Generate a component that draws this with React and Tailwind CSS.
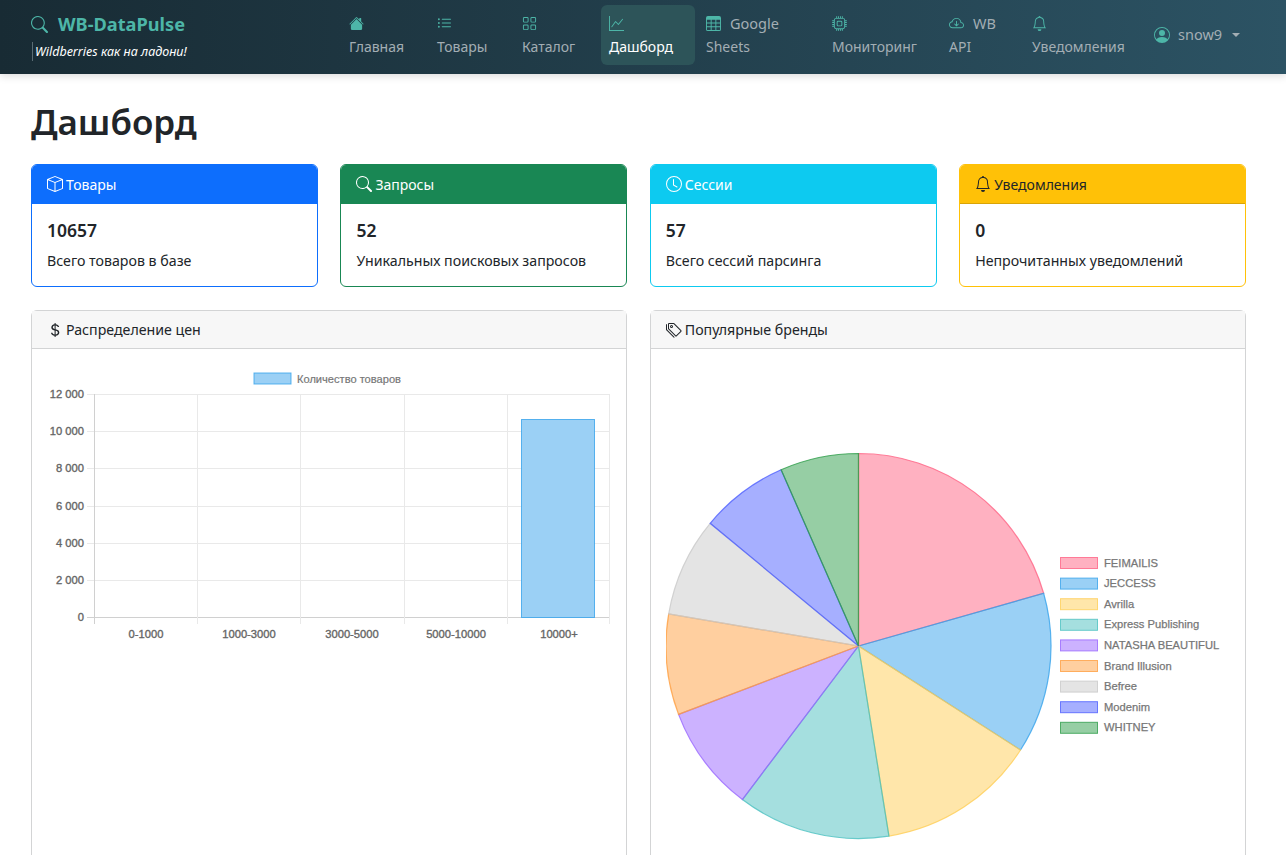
import {
  BsBell, BsBox, BsClock, BsCloudArrowDown, BsCpu, BsCurrencyDollar, BsGraphUp, BsGrid, BsHouseFill,
  BsListUl, BsPersonCircle, BsSearch, BsTable, BsTags,
} from 'react-icons/bs'

const font = { fontFamily: '"Noto Sans", sans-serif' }

const navItems = [
  { label: 'Главная', icon: BsHouseFill, width: 'w-[88px]' },
  { label: 'Товары', icon: BsListUl, width: 'w-[85px]' },
  { label: 'Каталог', icon: BsGrid, width: 'w-[79px] mr-[8px]' },
  { label: 'Дашборд', icon: BsGraphUp, width: 'w-[94px] mr-[3px]', active: true },
  { label: 'Google Sheets', icon: BsTable, width: 'w-[126px]', inline: true, first: 'Google', second: 'Sheets' },
  { label: 'Мониторинг', icon: BsCpu, width: 'w-[117px]' },
  { label: 'WB API', icon: BsCloudArrowDown, width: 'w-[83px]', inline: true, first: 'WB', second: 'API' },
  { label: 'Уведомления', icon: BsBell, width: 'w-[122px]' },
]

const stats = [
  { title: 'Товары', value: '10657', text: 'Всего товаров в базе', icon: BsBox, border: 'border-[#0d6efd]', head: 'bg-[#0d6efd] text-white border-[#0d6efd]' },
  { title: 'Запросы', value: '52', text: 'Уникальных поисковых запросов', icon: BsSearch, border: 'border-[#198754]', head: 'bg-[#198754] text-white border-[#198754]' },
  { title: 'Сессии', value: '57', text: 'Всего сессий парсинга', icon: BsClock, border: 'border-[#0dcaf0]', head: 'bg-[#0dcaf0] text-white border-[#0dcaf0]' },
  { title: 'Уведомления', value: '0', text: 'Непрочитанных уведомлений', icon: BsBell, border: 'border-[#ffc107]', head: 'bg-[#ffc107] text-[#212529] border-[#d9a406]' },
]

const brands = [
  { name: 'FEIMAILIS', color: '#ff6384', to: 74.1 },
  { name: 'JECCESS', color: '#36a2eb', to: 122.7 },
  { name: 'Avrilla', color: '#ffce56', to: 170.9 },
  { name: 'Express Publishing', color: '#4bc0c0', to: 217.1 },
  { name: 'NATASHA BEAUTIFUL', color: '#9966ff', to: 249.2 },
  { name: 'Brand Illusion', color: '#ff9f40', to: 279.6 },
  { name: 'Befree', color: '#c9c9c9', to: 309.6 },
  { name: 'Modenim', color: '#4d5fff', to: 336.3 },
  { name: 'WHITNEY', color: '#2e9e4a', to: 360 },
]

function NavLink({ item }) {
  const Icon = item.icon
  return (
    <a className={`${item.width} h-[60px] shrink-0 rounded-md px-2 pt-[7px] text-[14px] leading-[23px] ${item.active ? 'bg-[#2d5459] text-white' : 'text-[#a3aeb4]'}`}>
      <div className="flex h-[23px] items-center gap-[9px]">
        <Icon className="text-[15px] text-[#4db6a8]" />
        {item.inline && <span className="text-[14.5px]">{item.first}</span>}
      </div>
      <div>{item.inline ? item.second : item.label}</div>
    </a>
  )
}

function StatCard({ card }) {
  const Icon = card.icon
  return (
    <div className={`overflow-hidden rounded-md border bg-white ${card.border}`}>
      <div className={`flex h-[39px] items-center gap-[3px] border-b px-[15px] text-[14px] ${card.head}`}>
        <Icon className="text-[16px]" />
        <span className="pt-px">{card.title}</span>
      </div>
      <div className="h-[82px] px-[15px] pt-[14px] text-[#212529]">
        <div className="text-[17.5px] font-semibold leading-[24px]">{card.value}</div>
        <div className="mt-[7px] text-[14.2px] leading-[24px]">{card.text}</div>
      </div>
    </div>
  )
}

function ChartCard({ title, icon: Icon, gap, children }) {
  return (
    <div className="rounded-md border border-[#d3d4d5] bg-white">
      <div className={`flex h-[38px] items-center border-b border-[#d3d4d5] bg-[#f7f7f7] px-[15px] text-[14.2px] text-[#212529] ${gap}`}>
        <Icon className="text-[16px]" />
        <span>{title}</span>
      </div>
      <div className="px-[15px] py-[16px]">{children}</div>
    </div>
  )
}

function BarChart() {
  const rows = [
    ['12 000', 394], ['10 000', 431], ['8 000', 468], ['6 000', 506], ['4 000', 543], ['2 000', 580], ['0', 617],
  ]
  const cols = [
    ['0-1000', 94], ['1000-3000', 197], ['3000-5000', 300], ['5000-10000', 404], ['10000+', 507],
  ]
  return (
    <svg className="block w-[564px] h-[520px]" viewBox="47 365 564 520" style={{ fontFamily: '"Liberation Sans", sans-serif' }}>
      <rect x="254" y="373" width="37" height="11" fill="#9bd0f5" stroke="#36a2eb" strokeOpacity="0.8" />
      <text x="297" y="382.5" fontSize="11.1" fill="#777" stroke="#777" strokeWidth="0.2">Количество товаров</text>
      {rows.map(([label, y]) => (
        <g key={label}>
          <line x1="87" x2="610" y1={y + 0.5} y2={y + 0.5} stroke={y === 617 ? '#d0d0d0' : '#e9e9e9'} />
          <text x="84" y={y + 3.5} fontSize="11.2" textAnchor="end" fill="#666" stroke="#666" strokeWidth="0.35">{label}</text>
        </g>
      ))}
      {[94, 197, 300, 404, 507, 609].map((x) => (
        <line key={x} x1={x + 0.5} x2={x + 0.5} y1="394" y2="624" stroke={x === 94 ? '#d0d0d0' : '#e9e9e9'} />
      ))}
      {cols.map(([label, x]) => (
        <text key={label} x={x + 52} y="638" fontSize="11.2" textAnchor="middle" fill="#666" stroke="#666" strokeWidth="0.35">{label}</text>
      ))}
      <rect x="521.5" y="419.5" width="73" height="198" fill="#9bd0f5" stroke="#36a2eb" strokeOpacity="0.8" />
    </svg>
  )
}

function slicePath(from, to) {
  const cx = 858.5
  const cy = 646
  const r = 192.5
  const point = (deg) => {
    const a = (deg * Math.PI) / 180
    return `${cx + r * Math.sin(a)} ${cy - r * Math.cos(a)}`
  }
  return `M${cx} ${cy}L${point(from)}A${r} ${r} 0 0 1 ${point(to)}Z`
}

function PieChart() {
  return (
    <svg className="block w-[564px] h-[520px]" viewBox="666 365 564 520" style={{ fontFamily: '"Liberation Sans", sans-serif' }}>
      {brands.map((b, i) => (
        <path key={b.name} d={slicePath(i ? brands[i - 1].to : 0, b.to)} fill={b.color} fillOpacity="0.5" stroke={b.color} strokeOpacity="0.8" strokeWidth="1.2" />
      ))}
      {brands.map((b, i) => (
        <g key={b.name}>
          <rect x="1060.5" y={557.5 + i * 20.6} width="37" height="11" fill={b.color} fillOpacity="0.5" stroke={b.color} strokeOpacity="0.8" />
          <text x="1104" y={566.5 + i * 20.6} fontSize="11.2" fill="#777" stroke="#777" strokeWidth="0.25">{b.name}</text>
        </g>
      ))}
    </svg>
  )
}

export default function App() {
  return (
    <div className="h-screen overflow-hidden bg-white" style={font}>
      <nav className="relative z-10 flex h-[74px] bg-gradient-to-r from-[#182b34] to-[#2c5364] pl-[31px] shadow-[0_2px_8px_rgba(0,0,0,0.15)]">
        <div className="w-[310px] shrink-0 pt-[11px]">
          <div className="flex items-center gap-[10px] text-[#4db6a8]">
            <BsSearch className="text-[17px]" />
            <span className="text-[18.2px] font-bold leading-[26px]">WB-DataPulse</span>
          </div>
          <div className="ml-px mt-[5px] border-l border-[#5a6c74] pl-[2px] text-[12.5px] italic leading-[19px] text-white">
            Wildberries как на ладони!
          </div>
        </div>
        <div className="flex pt-[5px]">
          {navItems.map((item) => (
            <NavLink key={item.label} item={item} />
          ))}
          <div className="flex h-[60px] items-center gap-[8px] px-2 text-[14.5px] text-[#a3aeb4]">
            <BsPersonCircle className="text-[16px] text-[#4db6a8]" />
            <span>snow9</span>
            <span className="ml-[2px] h-0 w-0 border-x-[4px] border-t-[4px] border-x-transparent border-t-[#a3aeb4]" />
          </div>
        </div>
      </nav>

      <main className="pl-[31px] pr-[40px] pt-[20px]">
        <h1 className="text-[35px] font-semibold leading-[56px] text-[#212529]">Дашборд</h1>
        <div className="mt-[14px] grid grid-cols-4 gap-x-[22.5px]">
          {stats.map((card) => (
            <StatCard key={card.title} card={card} />
          ))}
        </div>
        <div className="mt-[23px] grid grid-cols-2 gap-x-[22.5px]">
          <ChartCard title="Распределение цен" icon={BsCurrencyDollar} gap="gap-[3px]">
            <BarChart />
          </ChartCard>
          <ChartCard title="Популярные бренды" icon={BsTags} gap="gap-[3px]">
            <PieChart />
          </ChartCard>
        </div>
      </main>
    </div>
  )
}
